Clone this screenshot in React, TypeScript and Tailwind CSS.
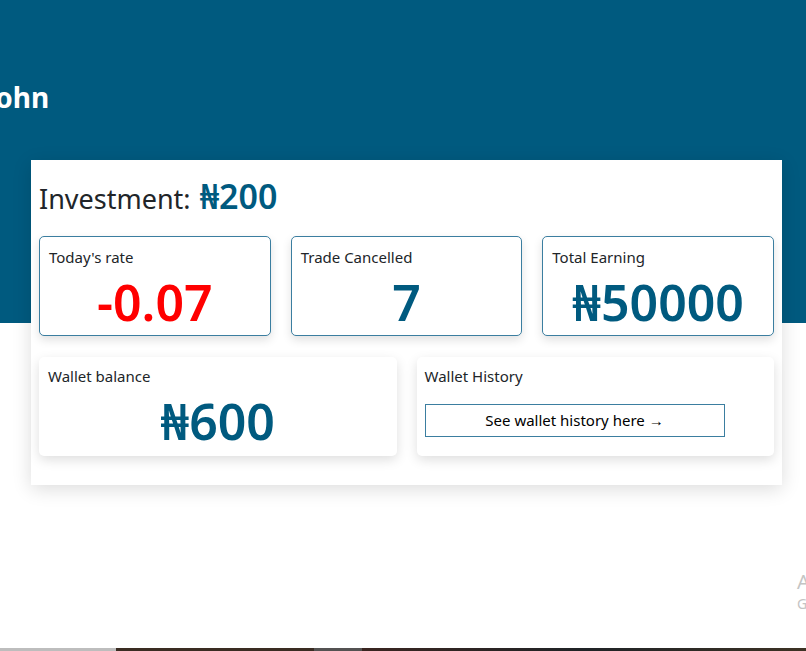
import React from 'react';

const font = { fontFamily: '"Noto Sans", "Open Sans", sans-serif' };

interface StatProps {
  label: string;
  value: string;
  red?: boolean;
}

const StatCard: React.FC<StatProps> = ({ label, value, red }) => (
  <div className="flex h-[100px] flex-col rounded-[5px] border border-[#3b7ea0] bg-white px-[9px] pt-[9px] shadow-[0_4px_10px_rgba(0,0,0,0.12)]">
    <span className="text-[15px] leading-[22px] text-[#212529]">{label}</span>
    <span
      className={`mt-[6px] text-center text-[50px] font-semibold leading-[56px] ${red ? 'text-[#ff0000]' : 'text-[#005a7f]'}`}
    >
      {value}
    </span>
  </div>
);

export default function App() {
  return (
    <div className="relative h-[651px] w-[806px] overflow-hidden bg-white" style={font}>
      <div className="h-[323px] bg-[#005a7f] pt-[79px]">
        <h1 className="-ml-[14px] text-[28px] font-bold leading-[36px] text-white">John</h1>
      </div>

      <div className="-mt-[163px] ml-[31px] w-[751px] bg-white px-2 pb-[29px] pt-[16px] shadow-[0_4px_18px_rgba(0,0,0,0.14)]">
        <h2 className="h-[40px] text-[27px] leading-[40px] text-[#212529]">
          Investment: <span className="ml-[2px] text-[34px] font-semibold leading-[40px] text-[#005a7f]">₦200</span>
        </h2>

        <div className="mt-[20px] grid grid-cols-3 gap-5">
          <StatCard label="Today's rate" value="-0.07" red />
          <StatCard label="Trade Cancelled" value="7" />
          <StatCard label="Total Earning" value="₦50000" />
        </div>

        <div className="mt-[21px] grid grid-cols-2 gap-5">
          <div className="flex h-[99px] flex-col rounded-[5px] bg-white px-[9px] pt-[8px] shadow-[0_4px_12px_rgba(0,0,0,0.13)]">
            <span className="text-[15px] leading-[22px] text-[#212529]">Wallet balance</span>
            <span className="mt-[6px] text-center text-[50px] font-semibold leading-[56px] text-[#005a7f]">₦600</span>
          </div>
          <div className="flex h-[99px] flex-col rounded-[5px] bg-white px-[8px] pt-[8px] shadow-[0_4px_12px_rgba(0,0,0,0.13)]">
            <span className="text-[15px] leading-[22px] text-[#212529]">Wallet History</span>
            <button className="mt-[17px] h-[33px] w-[300px] border border-[#3b7ea0] bg-white text-[15px] text-black">
              See wallet history here →
            </button>
          </div>
        </div>
      </div>

      <div className="absolute left-[797px] top-[570px] text-[#c4c4c4]">
        <div className="whitespace-nowrap text-[20px] leading-[24px]">Activate Windows</div>
        <div className="whitespace-nowrap text-[14px] leading-[20px]">Go to Settings to activate Windows.</div>
      </div>

      <div className="absolute bottom-0 left-0 flex h-[3px] w-full">
        <div className="w-[116px] bg-[#bdbdbd]" />
        <div className="w-[198px] bg-[#3a2c22]" />
        <div className="w-[48px] bg-[#545252]" />
        <div className="flex-1 bg-gradient-to-r from-[#3a2520] via-[#1f2326] to-[#3d3224]" />
      </div>
    </div>
  );
}
